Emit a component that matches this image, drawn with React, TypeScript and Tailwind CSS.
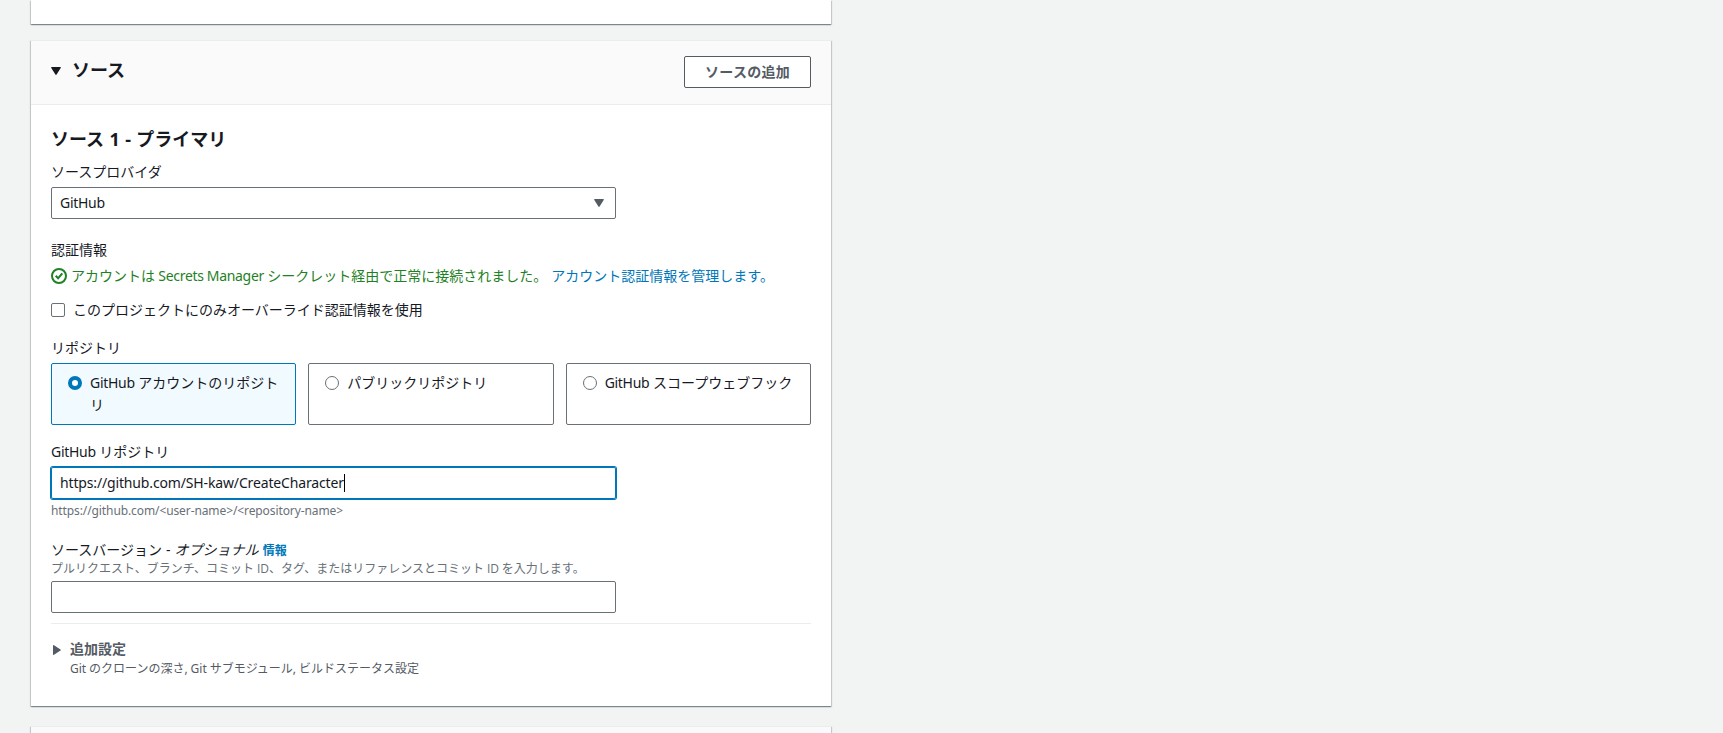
import type { ReactNode } from "react";

const card =
  "box-border w-[800px] border-[#eaeded] shadow-[0_1px_1px_0_rgba(0,28,36,0.3),1px_1px_1px_0_rgba(0,28,36,0.15),-1px_1px_1px_0_rgba(0,28,36,0.15)]";

function Latin({ children, className = "" }: { children: ReactNode; className?: string }) {
  return <span className={className || "tracking-[-0.3px]"}>{children}</span>;
}

function Label({ children, className = "" }: { children: ReactNode; className?: string }) {
  return <div className={"h-[22px] leading-[22px] " + className}>{children}</div>;
}

function Tile({ selected = false, children }: { selected?: boolean; children: ReactNode }) {
  return (
    <label
      className={
        "flex h-[62px] gap-2 rounded-[2px] border pt-2 pl-4 pr-3 " +
        (selected ? "border-[#0077b8] bg-[#f1faff]" : "border-[#687078] bg-white")
      }
    >
      <span
        className={
          "mt-1 h-[14px] w-[14px] shrink-0 rounded-full bg-white " +
          (selected ? "border-4 border-[#0077b8]" : "border border-[#687078]")
        }
      />
      <span className="leading-[22px]">{children}</span>
    </label>
  );
}

export default function App() {
  return (
    <div className="h-[733px] overflow-hidden bg-[#f2f3f3] pl-[31px] font-['Noto_Sans','Noto_Sans_CJK_JP',sans-serif] text-[14px] text-[#16191f]">
      <section className={card + " h-6 bg-white"} />

      <section className={card + " mt-4 h-[666px] border-t bg-white"}>
        <header className="flex h-16 items-start justify-between border-b border-[#eaeded] bg-[#fafafa] px-5 pt-[15px]">
          <h2 className="flex items-start text-[18px] leading-[28px] font-bold">
            <svg className="mt-[11px] mr-[11px] h-2 w-[10px]" viewBox="0 0 10 8" fill="#16191f">
              <path d="M.8 0h8.400q1.200 0 .5 1L5.600 7.500q-.6.8-1.200 0L.3 1Q-.4 0 .8 0z" />
            </svg>
            ソース
          </h2>
          <button className="h-8 w-[127px] rounded-[2px] border border-[#545b64] bg-white text-[14px] leading-[30px] font-bold tracking-[0.25px] text-[#545b64]">
            ソースの追加
          </button>
        </header>

        <div className="px-5 pt-[23px]">
          <h3 className="h-[22px] text-[18px] leading-[22px] font-bold [word-spacing:0.7px]">ソース 1 - プライマリ</h3>
          <Label className="mt-[11px]">ソースプロバイダ</Label>
          <div className="mt-1 flex h-8 w-[565px] items-center justify-between rounded-[2px] border border-[#687078] pr-[11px] pl-2">
            <Latin className="pb-[2px] tracking-[-0.3px]">GitHub</Latin>
            <svg className="h-2 w-[10px]" viewBox="0 0 10 8" fill="#545b64">
              <path d="M.8 0h8.400q1.200 0 .5 1L5.600 7.500q-.6.8-1.200 0L.3 1Q-.4 0 .8 0z" />
            </svg>
          </div>

          <Label className="mt-5">認証情報</Label>
          <div className="mt-1 flex h-[22px] items-center leading-[22px] whitespace-pre text-[#1f8125]">
            <svg className="mr-1 h-4 w-4" viewBox="0 0 16 16" fill="none" stroke="#1f8125" strokeWidth="2">
              <circle cx="8" cy="8" r="7" />
              <path d="M4.700 7.800 7.100 10.200 11.300 5.400" />
            </svg>
            <span className="[word-spacing:-0.3px]">
              アカウントは <Latin>Secrets Manager</Latin> シークレット経由で正常に接続されました。
            </span>
            <a className="ml-[4px] text-[#0077b8]">アカウント認証情報を管理します。</a>
          </div>

          <label className="mt-3 flex h-[22px] items-center leading-[22px]">
            <span className="mr-2 h-[14px] w-[14px] rounded-[2px] border border-[#687078] bg-white" />
            このプロジェクトにのみオーバーライド認証情報を使用
          </label>

          <Label className="mt-4">リポジトリ</Label>
          <div className="mt-1 grid grid-cols-3 gap-3">
            <Tile selected>
              <Latin>GitHub</Latin> アカウントのリポジトリ
            </Tile>
            <Tile>パブリックリポジトリ</Tile>
            <Tile>
              <Latin>GitHub</Latin> スコープウェブフック
            </Tile>
          </div>

          <Label className="mt-4">
            <Latin>GitHub</Latin> リポジトリ
          </Label>
          <div className="mt-1 flex h-8 w-[565px] items-center rounded-[2px] border border-[#0077b8] pl-2 shadow-[0_0_0_1px_#0077b8]">
            <Latin className="pb-[2px] tracking-[-0.15px]">https://github.com/SH-kaw/CreateCharacter</Latin>
            <span className="h-[18px] w-px bg-black" />
          </div>
          <div className="mt-[3px] h-[18px] text-[12px] leading-[18px] text-[#687078]">
            <Latin className="tracking-[-0.1px]">https://github.com/&lt;user-name&gt;/&lt;repository-name&gt;</Latin>
          </div>

          <div className="mt-5 h-5 leading-5 [word-spacing:0.4px]">
            ソースバージョン - <i>オプショナル</i>{" "}
            <a className="text-[12px] font-bold text-[#0077b8]">情報</a>
          </div>
          <div className="h-[17px] text-[12px] leading-[18px] text-[#687078] [word-spacing:-0.2px]">
            プルリクエスト、ブランチ、コミット <Latin className="font-['Open_Sans']">ID</Latin>、タグ、またはリファレンスとコミット{" "}
            <Latin className="font-['Open_Sans']">ID</Latin> を入力します。
          </div>
          <div className="mt-1 h-8 w-[565px] rounded-[2px] border border-[#687078]" />

          <div className="mt-[10px] flex border-t border-[#eaeded] pt-[14px] text-[#545b64]">
            <svg className="mt-[7px] mr-[9px] ml-[2px] h-[10px] w-2" viewBox="0 0 8 10" fill="#545b64">
              <path d="M0 .8v8.400q0 1.200 1 .5L7.500 5.600q.8-.6 0-1.200L1 .3Q0-.4 0 .8z" />
            </svg>
            <div>
              <div className="h-[22px] leading-[22px] font-bold">追加設定</div>
              <div className="text-[12px] leading-[17px] [word-spacing:-0.2px]">
                Git のクローンの深さ, Git サブモジュール, ビルドステータス設定
              </div>
            </div>
          </div>
        </div>
      </section>

      <section className={card + " mt-5 h-16 border-t bg-[#fafafa]"} />
    </div>
  );
}
